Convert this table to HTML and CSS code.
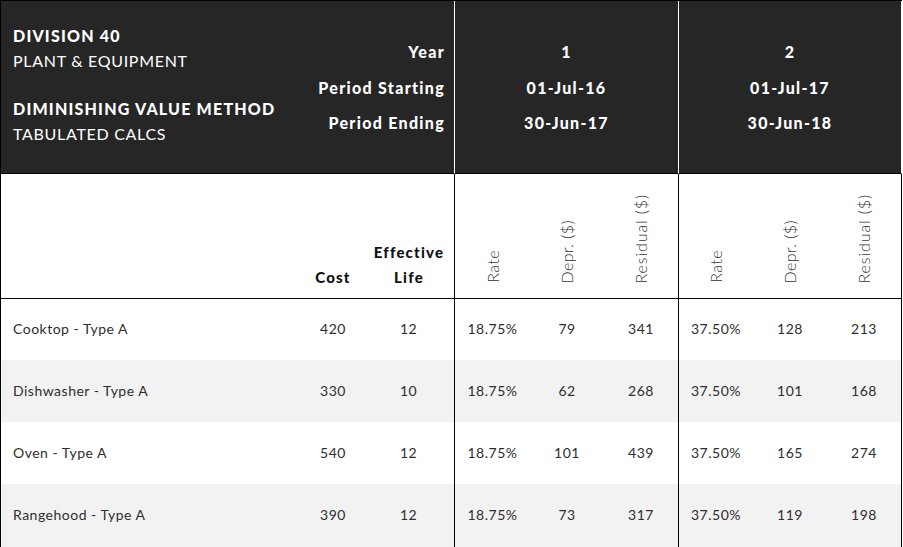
FILE: index.html
```html
<!DOCTYPE html>
<html lang="en">
<head>
<meta charset="utf-8">
<title>Division 40 - Diminishing Value Method</title>
<link rel="stylesheet" href="styles.css">
</head>
<body>
<div class="sheet">
  <div class="hd-left">
    <div class="title">
      <div class="t-bold">DIVISION 40</div>
      <div class="t-reg">PLANT &amp; EQUIPMENT</div>
      <div class="t-bold t-gap">DIMINISHING VALUE METHOD</div>
      <div class="t-reg">TABULATED CALCS</div>
    </div>
    <div class="labels">
      <div>Year</div>
      <div>Period Starting</div>
      <div>Period Ending</div>
    </div>
  </div>
  <div class="hd-year">
    <div>1</div>
    <div>01-Jul-16</div>
    <div>30-Jun-17</div>
  </div>
  <div class="hd-year">
    <div>2</div>
    <div>01-Jul-17</div>
    <div>30-Jun-18</div>
  </div>

  <div class="ch"></div>
  <div class="ch ch-bold">Cost</div>
  <div class="ch ch-bold ch-life grp-end">Effective<br>Life</div>
  <div class="ch ch-rot"><span>Rate</span></div>
  <div class="ch ch-rot"><span>Depr. ($)</span></div>
  <div class="ch ch-rot grp-end"><span class="long">Residual ($)</span></div>
  <div class="ch ch-rot"><span>Rate</span></div>
  <div class="ch ch-rot"><span>Depr. ($)</span></div>
  <div class="ch ch-rot grp-end"><span class="long">Residual ($)</span></div>

  <div class="row">
    <div class="c c-name">Cooktop - Type A</div>
    <div class="c">420</div>
    <div class="c c-life grp-end">12</div>
    <div class="c">18.75%</div>
    <div class="c">79</div>
    <div class="c grp-end">341</div>
    <div class="c">37.50%</div>
    <div class="c">128</div>
    <div class="c grp-end">213</div>
  </div>
  <div class="row alt">
    <div class="c c-name">Dishwasher - Type A</div>
    <div class="c">330</div>
    <div class="c c-life grp-end">10</div>
    <div class="c">18.75%</div>
    <div class="c">62</div>
    <div class="c grp-end">268</div>
    <div class="c">37.50%</div>
    <div class="c">101</div>
    <div class="c grp-end">168</div>
  </div>
  <div class="row">
    <div class="c c-name">Oven - Type A</div>
    <div class="c">540</div>
    <div class="c c-life grp-end">12</div>
    <div class="c">18.75%</div>
    <div class="c">101</div>
    <div class="c grp-end">439</div>
    <div class="c">37.50%</div>
    <div class="c">165</div>
    <div class="c grp-end">274</div>
  </div>
  <div class="row alt">
    <div class="c c-name">Rangehood - Type A</div>
    <div class="c">390</div>
    <div class="c c-life grp-end">12</div>
    <div class="c">18.75%</div>
    <div class="c">73</div>
    <div class="c grp-end">317</div>
    <div class="c">37.50%</div>
    <div class="c">119</div>
    <div class="c grp-end">198</div>
  </div>
</div>
</body>
</html>
```

FILE: styles.css
```css
html, body {
  margin: 0;
  padding: 0;
  background: #fff;
}
body {
  font-family: "Lato", "Noto Sans", sans-serif;
  color: #2b2b2b;
}
.sheet {
  display: grid;
  grid-template-columns: 294px 76px 84px 75px 74px 75px 74px 74px 75px;
  grid-template-rows: 173px 125px 61px 62px 62px 63px;
  width: max-content;
  border-left: 1px solid #000;
  border-top: 1px solid #000;
}
.hd-left {
  grid-column: span 3;
  background: #262626;
  color: #fff;
  border-right: 1px solid #fff;
  border-bottom: 1px solid #000;
  display: flex;
  justify-content: space-between;
}
.title {
  padding: 22px 0 0 12px;
}
.t-bold {
  font-size: 16px;
  line-height: 25px;
  font-weight: 900;
  letter-spacing: 1.2px;
}
.t-reg {
  font-size: 16px;
  line-height: 25px;
  font-weight: 400;
  letter-spacing: 0.7px;
}
.t-gap {
  margin-top: 23px;
}
.labels {
  padding: 33px 9px 0 0;
  text-align: right;
  font-size: 16px;
  line-height: 35.5px;
  font-weight: 900;
  letter-spacing: 1.3px;
}
.hd-year {
  grid-column: span 3;
  background: #262626;
  color: #fff;
  border-right: 1px solid #fff;
  border-bottom: 1px solid #000;
  padding-top: 33px;
  text-align: center;
  font-size: 16px;
  line-height: 35.5px;
  font-weight: 900;
  letter-spacing: 1.3px;
}
.ch {
  border-bottom: 1px solid #000;
  display: flex;
  align-items: flex-end;
  justify-content: center;
  text-align: center;
}
.ch-bold {
  font-size: 15px;
  line-height: 25px;
  font-weight: 900;
  color: #111;
  padding-bottom: 8px;
  letter-spacing: 1.2px;
}
.ch-life {
  padding-right: 7px;
}
.ch-rot {
  padding-bottom: 15px;
  font-size: 16px;
  font-weight: 300;
  color: #333;
  letter-spacing: 0.4px;
}
.ch-rot span {
  writing-mode: vertical-rl;
  transform: rotate(180deg);
  line-height: 18px;
}
.ch-rot .long {
  letter-spacing: 0.9px;
}
.grp-end {
  border-right: 1px solid #000;
}
.row {
  display: contents;
}
.c {
  display: flex;
  align-items: center;
  justify-content: center;
  padding-bottom: 2px;
  font-size: 14px;
  letter-spacing: 0.5px;
  color: #2e2e2e;
  background: #fff;
}
.row.alt .c {
  background: #f2f2f2;
}
.c-name {
  justify-content: flex-start;
  padding-left: 12px;
}
.c-life {
  padding-right: 8px;
}
```
